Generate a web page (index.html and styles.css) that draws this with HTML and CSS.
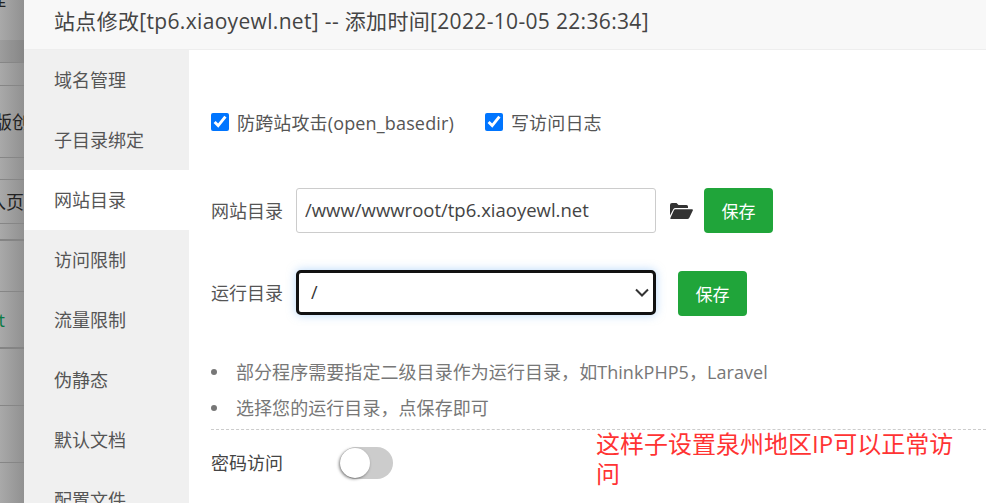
FILE: index.html
```html
<!DOCTYPE html>
<html lang="zh-CN">
<head>
    <meta charset="UTF-8">
    <meta name="viewport" content="width=device-width, initial-scale=1.0">
    <title>站点修改</title>
    <link rel="stylesheet" href="styles.css">
</head>
<body>
    <div class="backdrop">
        <div class="bg-row h40"><span class="clip-top">管理</span></div>
        <div class="bg-row h22 dark"></div>
        <div class="bg-row h23 line"></div>
        <div class="bg-row h72 line"><span class="clip-right">版创</span></div>
        <div class="bg-row h22 line"></div>
        <div class="bg-row h44 line"><span>入页</span></div>
        <div class="bg-row h16 line"></div>
        <div class="bg-row h52 line thick"></div>
        <div class="bg-row h56 line"><span class="green">t</span></div>
        <div class="bg-row h58 line thick"></div>
        <div class="bg-row h57 line"></div>
        <div class="bg-row h41 line"></div>
    </div>

    <div class="dialog">
        <div class="dialog-title">站点修改[tp6.xiaoyewl.net] -- 添加时间[2022-10-05 22:36:34]</div>
        <div class="dialog-body">
            <ul class="side-nav">
                <li>域名管理</li>
                <li>子目录绑定</li>
                <li class="active">网站目录</li>
                <li>访问限制</li>
                <li>流量限制</li>
                <li>伪静态</li>
                <li>默认文档</li>
                <li>配置文件</li>
            </ul>
            <div class="content">
                <div class="check-row">
                    <label><input type="checkbox" checked> 防跨站攻击(open_basedir)</label>
                    <label><input type="checkbox" checked> 写访问日志</label>
                </div>
                <div class="form-row">
                    <span class="form-label">网站目录</span>
                    <input class="path-input" type="text" value="/www/wwwroot/tp6.xiaoyewl.net">
                    <svg class="folder-icon" width="23" height="17" viewBox="0 0 23 17">
                        <path fill="#333" d="M0 3Q0 1 2 1H6.500L8.500 3H16.500Q18 3 18 4.500V6H5.500Q4 6 3.300 7.300L0 13.500Z"/>
                        <path fill="#333" d="M5.300 7.300H22Q23.300 7.300 22.800 8.500L19.300 15.800Q18.700 17 17.300 17H1.200Q0 17 .5 15.800L3.800 8.500Q4.300 7.300 5.300 7.300Z"/>
                    </svg>
                    <button class="save-btn folder-save">保存</button>
                </div>
                <div class="form-row second">
                    <span class="form-label">运行目录</span>
                    <select class="dir-select"><option>/</option></select>
                    <button class="save-btn select-save">保存</button>
                </div>
                <ul class="help-list">
                    <li>部分程序需要指定二级目录作为运行目录，如ThinkPHP5，Laravel</li>
                    <li>选择您的运行目录，点保存即可</li>
                </ul>
                <div class="password-row">
                    <span class="password-label">密码访问</span>
                    <div class="toggle"><div class="knob"></div></div>
                </div>
            </div>
        </div>
    </div>

    <div class="annotation">这样子设置泉州地区IP可以正常访问</div>
</body>
</html>
```

FILE: styles.css
```css
* {
    box-sizing: border-box;
}
html, body {
    height: 503px;
}
body {
    margin: 0;
    display: flex;
    overflow: hidden;
    font-family: "Open Sans", "Noto Sans CJK SC", sans-serif;
    font-size: 18px;
    color: #555;
    background: #fff;
}

/* dimmed page behind the dialog */
.backdrop {
    width: 24px;
    flex-shrink: 0;
    overflow: hidden;
    background: linear-gradient(90deg, #a9a9a9, #919191);
    color: #222;
}
.bg-row {
    display: flex;
    justify-content: flex-end;
    align-items: center;
    overflow: hidden;
    white-space: nowrap;
    line-height: 24px;
}
.bg-row.line { border-top: 1px solid #868686; }
.bg-row.thick { border-top: 2px solid #848484; }
.bg-row.dark { background: rgba(0, 0, 0, 0.07); }
.h16 { height: 16px; }
.h22 { height: 22px; }
.h23 { height: 23px; }
.h40 { height: 40px; }
.h41 { height: 41px; }
.h44 { height: 44px; }
.h52 { height: 52px; }
.h56 { height: 56px; }
.h57 { height: 57px; }
.h58 { height: 58px; }
.h72 { height: 72px; }
.clip-top { align-self: flex-start; margin-top: -13px; margin-right: 18px; }
.clip-right { margin-right: -6px; }
.green { color: #0a7a45; margin-right: 19px; }

.dialog {
    flex: 1;
    min-width: 0;
}
.dialog-title {
    height: 50px;
    padding-left: 30px;
    line-height: 42px;
    font-size: 21px;
    letter-spacing: 0.33px;
    color: #444;
    background: #f8f8f8;
    border-bottom: 1px solid #eee;
}
.dialog-body {
    display: flex;
    height: 453px;
    overflow: hidden;
}
.side-nav {
    width: 165px;
    flex-shrink: 0;
    margin: 0;
    padding: 0;
    list-style: none;
    background: #f0f0f0;
}
.side-nav li {
    height: 60px;
    padding-left: 30px;
    line-height: 60px;
}
.side-nav li.active {
    background: #fff;
}

.content {
    flex: 1;
    min-width: 0;
    padding: 57px 0 0 22px;
}
.check-row {
    display: flex;
    gap: 31px;
    height: 30px;
    align-items: center;
    letter-spacing: 0.15px;
}
.check-row label {
    display: flex;
    align-items: center;
    gap: 8px;
    padding-bottom: 1px;
}
.check-row input {
    width: 18px;
    height: 18px;
    margin: 1px 0 0;
}
.form-row {
    display: flex;
    align-items: center;
    margin-top: 51px;
}
.form-row.second {
    margin-top: 37px;
}
.form-label {
    width: 85px;
    flex-shrink: 0;
    padding-bottom: 2px;
}
.path-input, .dir-select {
    width: 360px;
    height: 45px;
    font: inherit;
    color: #444;
    background: #fff;
}
.path-input {
    padding: 0 8px 2px;
    font-size: 18.5px;
    border: 1px solid #ccc;
    border-radius: 3px;
}
.dir-select {
    appearance: none;
    align-self: flex-start;
    padding: 0 30px 2px 12px;
    color: #333;
    border: 3px solid #111;
    border-radius: 5px;
    box-shadow: 0 0 10px rgba(110, 175, 245, 0.5);
    outline: none;
    background: #fff url("data:image/svg+xml,%3Csvg xmlns='http://www.w3.org/2000/svg' width='14' height='9' viewBox='0 0 14 9'%3E%3Cpath d='M1 1.500l6 6 6-6' fill='none' stroke='%23333' stroke-width='2'/%3E%3C/svg%3E") no-repeat right 4px center;
}
.folder-icon {
    margin-left: 14px;
}
.save-btn {
    width: 69px;
    height: 45px;
    padding: 0;
    font: inherit;
    font-size: 17px;
    color: #fff;
    background: #20a53a;
    border: none;
    border-radius: 4px;
}
.folder-save { margin-left: 11px; }
.select-save { margin-left: 22px; align-self: flex-start; margin-top: 1px; }

.help-list {
    margin: 37px 0 0;
    padding: 0;
    list-style: none;
    color: #777;
    letter-spacing: 0.06px;
}
.help-list li {
    display: flex;
    align-items: center;
    height: 36px;
}
.help-list li::before {
    content: "";
    width: 6px;
    height: 6px;
    margin: 1px 19px 0 0;
    border-radius: 50%;
    background: #777;
}
.password-row {
    display: flex;
    align-items: center;
    margin-top: 4px;
    padding-top: 17px;
    border-top: 1px dashed #ccc;
}
.password-label {
    width: 129px;
    flex-shrink: 0;
    padding-bottom: 2px;
    color: #444;
}
.toggle {
    width: 53px;
    height: 32px;
    border-radius: 16px;
    background: #ccc;
}
.knob {
    width: 30px;
    height: 30px;
    margin-top: 1px;
    border-radius: 50%;
    background: #fff;
    box-shadow: -1px 1px 3px rgba(0, 0, 0, 0.5);
}

/* red note typed over the screenshot */
.annotation {
    position: absolute;
    left: 596px;
    top: 429px;
    width: 370px;
    font-size: 24px;
    line-height: 30px;
    color: #f33;
}
```
